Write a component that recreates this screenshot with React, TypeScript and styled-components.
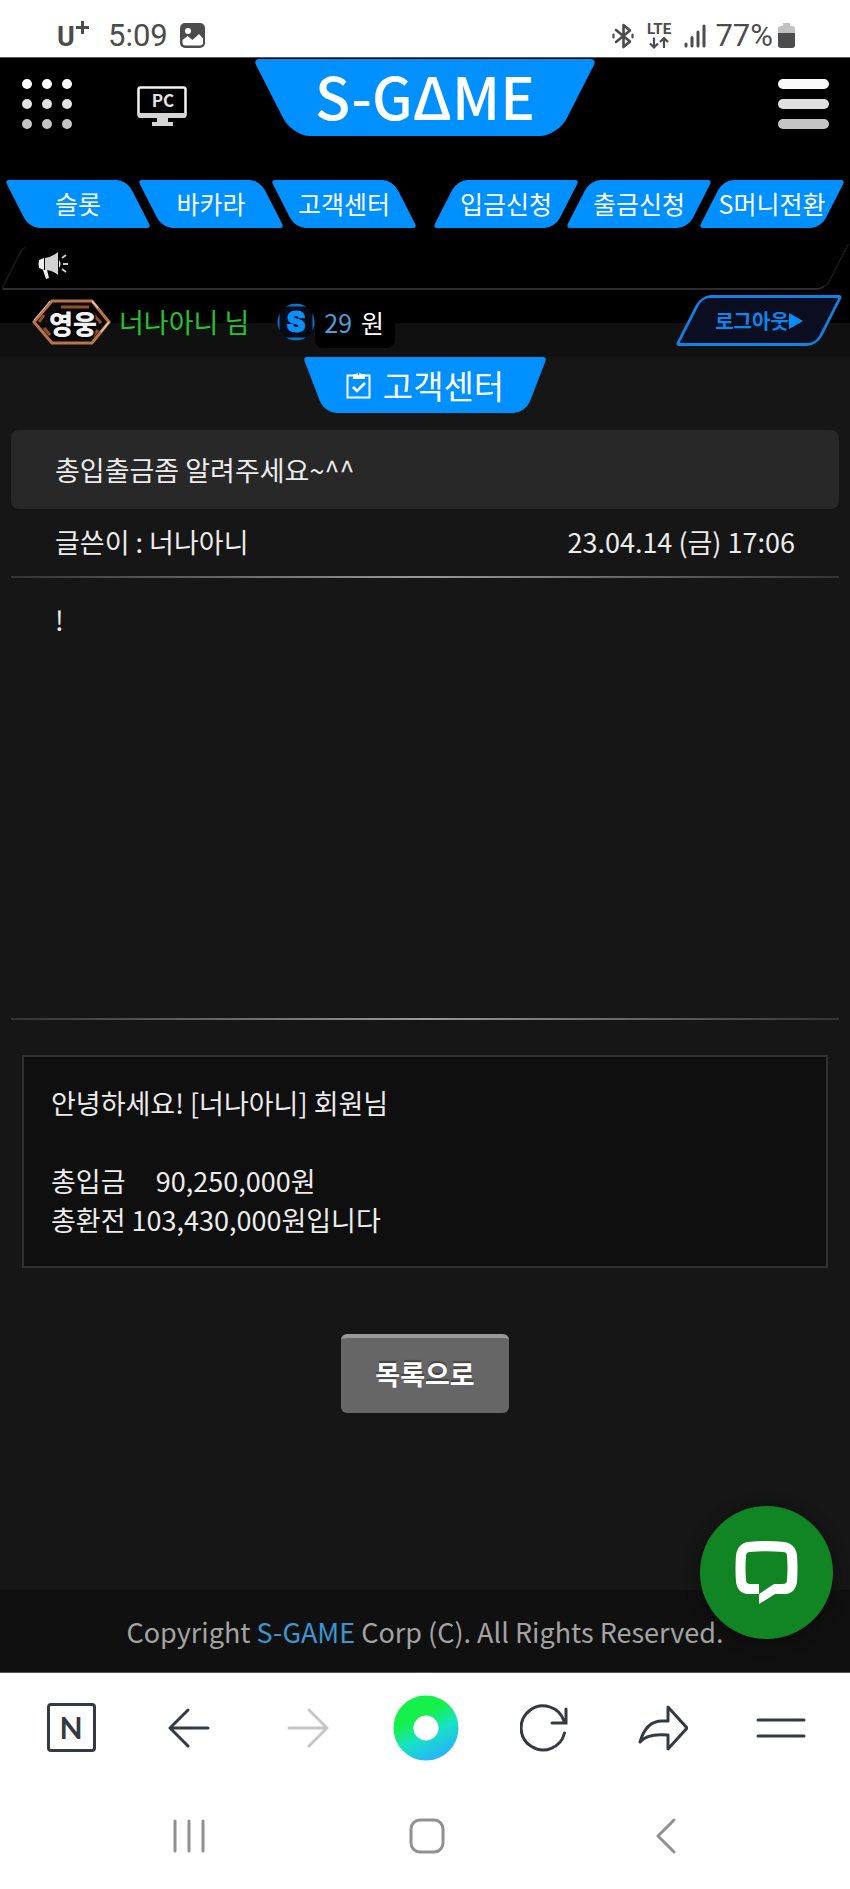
import React from "react";
import styled, { createGlobalStyle, css } from "styled-components";

const BLUE = "#0090ff";
const INK = "#343a42";

const GlobalStyle = createGlobalStyle`
  *, *::before, *::after { box-sizing: border-box; }
  body {
    margin: 0;
    background: #161616;
    color: #ececec;
    font-family: "Noto Sans CJK KR", "Noto Sans", sans-serif;
    font-size: 27px;
    line-height: 39px;
  }
  button { font: inherit; color: inherit; background: none; border: 0; padding: 0; cursor: pointer; }
  a { color: inherit; text-decoration: none; }
  h1, h2, p { margin: 0; font-weight: 400; }
  svg { display: block; }
`;

/* ---------- device status bar ---------- */

const StatusBar = styled.div`
  display: flex;
  align-items: center;
  justify-content: space-between;
  height: 58px;
  padding: 14px 55px 0 56px;
  background: #fff;
  border-bottom: 1px solid #555;
  color: #4c4c4c;
  font-family: Roboto, sans-serif;
  font-size: 31px;
  line-height: 36px;
`;

const StatusGroup = styled.div<{ $gap: number }>`
  display: flex;
  align-items: center;
  gap: ${(p) => p.$gap}px;
`;

const Battery = styled.div`
  display: flex;
  align-items: center;
  gap: 5px;
`;

/* ---------- site header ---------- */

const Header = styled.header`
  background: #000;
`;

const TopRow = styled.div`
  display: grid;
  grid-template-columns: 1fr auto 1fr;
  height: 122px;
  padding: 0 20px;
`;

const TopActions = styled.div<{ $end?: boolean }>`
  display: flex;
  align-items: center;
  justify-content: ${(p) => (p.$end ? "flex-end" : "flex-start")};
  gap: 65px;
  height: 92px;
`;

const trapezoid = (angle: number, small: number, large: number) => css`
  position: relative;
  isolation: isolate;
  &::before,
  &::after {
    content: "";
    position: absolute;
    z-index: -1;
    top: 0;
    bottom: 0;
    width: 60%;
    background: ${BLUE};
  }
  &::before {
    left: 0;
    border-radius: ${small}px 0 0 ${large}px;
    transform: skewX(${angle}deg);
    transform-origin: top left;
  }
  &::after {
    right: 0;
    border-radius: 0 ${small}px ${large}px 0;
    transform: skewX(-${angle}deg);
    transform-origin: top right;
  }
`;

const Logo = styled.a`
  ${trapezoid(27, 6, 18)}
  display: flex;
  justify-content: center;
  width: 344px;
  height: 77px;
  margin-top: 1px;
  color: #fff;
  font-size: 58px;
  font-weight: 500;
  line-height: 72px;
`;

const NavRow = styled.nav`
  display: grid;
  grid-template-columns: 1fr 1fr;
  gap: 40px;
  padding: 0 17px 15px;
`;

const NavGroup = styled.div`
  display: grid;
  grid-template-columns: repeat(3, 1fr);
  gap: 11px;
`;

const NavTab = styled.a<{ $lean: "left" | "right" }>`
  position: relative;
  isolation: isolate;
  display: flex;
  justify-content: center;
  height: 48px;
  color: #fff;
  font-size: 25px;
  line-height: 46px;
  white-space: nowrap;
  &::before {
    content: "";
    position: absolute;
    z-index: -1;
    inset: 0;
    background: ${BLUE};
    border-radius: ${(p) => (p.$lean === "left" ? "4px 10px 4px 10px" : "10px 4px 10px 4px")};
    transform: skewX(${(p) => (p.$lean === "left" ? 27 : -27)}deg);
  }
`;

const Notice = styled.div`
  position: relative;
  display: flex;
  align-items: center;
  height: 47px;
  margin: 0 12px;
  padding: 0 0 2px 26px;
  &::before {
    content: "";
    position: absolute;
    inset: 0;
    border: 2px solid #19191b;
    border-top-color: transparent;
    border-bottom-color: #2c2c31;
    border-radius: 10px 0 10px 4px;
    transform: skewX(-27deg);
  }
`;

const UserRow = styled.div`
  display: flex;
  align-items: flex-start;
  justify-content: space-between;
  height: 67px;
  padding: 5px 20px 0 32px;
  background: linear-gradient(#000 33px, #101010 33px);
`;

const UserInfo = styled.div`
  display: flex;
  align-items: center;
  height: 54px;
`;

const UserName = styled.span`
  margin: 0 28px 0 8px;
  padding-bottom: 2px;
  color: #25c32f;
`;

const Balance = styled.span`
  height: 52px;
  padding: 0 11px 0 9px;
  border-radius: 8px;
  background: #000;
  color: #fff;
  font-size: 25px;
  line-height: 52px;
`;

const Amount = styled.span`
  margin-right: 9px;
  color: #4a9fdc;
`;

const Logout = styled.button`
  position: relative;
  isolation: isolate;
  display: flex;
  align-items: center;
  justify-content: center;
  width: 142px;
  height: 51px;
  color: #0c86ec;
  font-size: 20px;
  font-weight: 700;
  &::before {
    content: "";
    position: absolute;
    z-index: -1;
    inset: 0;
    border: 3px solid #0c84ea;
    border-radius: 10px 4px 10px 4px;
    background: #0a0e20;
    transform: skewX(-27deg);
  }
`;

/* ---------- post ---------- */

const Site = styled.div`
  position: relative;
  border-bottom: 1px solid #555;
`;

const Main = styled.main`
  display: flex;
  flex-direction: column;
  padding: 0 11px 177px;
`;

const SectionTitle = styled.h1`
  ${trapezoid(21, 4, 12)}
  display: flex;
  align-items: center;
  align-self: center;
  justify-content: center;
  gap: 11px;
  width: 244px;
  height: 56px;
  margin-bottom: 17px;
  color: #fff;
  font-size: 33px;
  line-height: 56px;
`;

const PostTitle = styled.h2`
  padding: 20px 44px;
  border-radius: 8px;
  background: #282828;
  font-size: 27px;
`;

const PostMeta = styled.div`
  display: flex;
  justify-content: space-between;
  padding: 13px 44px 15px;
`;

const Divider = styled.hr`
  width: 100%;
  height: 2px;
  margin: 0;
  border: 0;
  background: linear-gradient(90deg, #333, #999 50%, #333);
`;

const PostBody = styled.p`
  min-height: 440px;
  padding: 22px 44px;
`;

const Reply = styled.section`
  margin: 35px 11px 66px;
  padding: 26px 27px 27px;
  border: 2px solid #303030;
  background: #0f0f0f;
  white-space: pre-wrap;
`;

const ListButton = styled.button`
  align-self: center;
  width: 168px;
  height: 79px;
  padding-bottom: 4px;
  border-top: 4px solid #999;
  border-radius: 6px;
  background: #666;
  color: #fff;
  font-weight: 700;
  text-shadow: 0 -2px 1px #444;
`;

const Footer = styled.footer`
  padding: 22px 0 21px;
  background: #101010;
  color: #a3a3a3;
  text-align: center;
`;

const Brand = styled.a`
  color: #3b96d4;
`;

const ChatButton = styled.button`
  position: absolute;
  right: 17px;
  bottom: 33px;
  display: flex;
  align-items: center;
  justify-content: center;
  width: 133px;
  height: 133px;
  border-radius: 50%;
  background: #118423;
  box-shadow: 0 2px 16px rgba(0, 0, 0, 0.4);
`;

/* ---------- browser and system bars ---------- */

const Toolbar = styled.nav`
  display: grid;
  grid-template-columns: repeat(7, 1fr);
  align-items: center;
  justify-items: center;
  height: 109px;
  padding: 0 10px 0 12px;
  background: #fff;
  color: ${INK};
`;

const SystemBar = styled.nav`
  display: grid;
  grid-template-columns: repeat(3, 1fr);
  align-items: center;
  justify-items: center;
  height: 107px;
  padding: 0 65px 0 70px;
  background: #fff;
  color: #919191;
`;

const HomeN = styled.button`
  width: 49px;
  height: 49px;
  border: 3px solid ${INK};
  border-radius: 4px;
  font-family: Lato, sans-serif;
  font-size: 30px;
  font-weight: 700;
  line-height: 43px;
`;

/* ---------- icons ---------- */

const PhotoIcon = () => (
  <svg width="25" height="25" viewBox="0 0 25 25">
    <rect x="0" y="0" width="25" height="25" rx="5" fill="#4c4c4c" />
    <circle cx="8" cy="8" r="3" fill="#fff" />
    <path d="M2.500 17l5-4 5 4 6.500-6 4 4.500v4a3 3 0 0 1-3 3h-14.500a3 3 0 0 1-3-3z" fill="#fff" />
  </svg>
);

const CarrierMark = () => (
  <svg width="34" height="40" viewBox="0 -5 34 40" fill="#4c4c4c" fontFamily="Roboto, sans-serif" fontWeight="700">
    <text x="1" y="25" fontSize="27">U</text>
    <path d="M20 6.500h13M26.500 0v13" stroke="#4c4c4c" strokeWidth="3" />
  </svg>
);

const BluetoothIcon = () => (
  <svg width="22" height="26" viewBox="0 0 22 26" fill="none" stroke="#4c4c4c" strokeWidth="2.600" strokeLinejoin="round" strokeLinecap="round">
    <path d="M4 7l14 11.500-6.500 5.500V2l6.500 5.500L4 19" />
    <path d="M1.500 11.500v3M20.500 11.500v3" strokeWidth="2.200" />
  </svg>
);

const LteIcon = () => (
  <svg width="28" height="36" viewBox="0 -5 28 36">
    <text x="14" y="11" textAnchor="middle" fontFamily="Roboto, sans-serif" fontSize="15" fontWeight="700" fill="#4c4c4c">LTE</text>
    <path d="M9 14.500v9.500M5 20.500l4 4 4-4M19 25v-9.500M15 19l4-4 4 4" fill="none" stroke="#4c4c4c" strokeWidth="2.200" />
  </svg>
);

const SignalIcon = () => (
  <svg width="22" height="24" viewBox="0 0 22 24" stroke="#4c4c4c" strokeWidth="3" strokeLinecap="round">
    <path d="M2 20v2M8 13.500v8.500M14 8v14M20 2v20" />
  </svg>
);

const BatteryIcon = () => (
  <svg width="17" height="25" viewBox="0 0 17 25">
    <path d="M5 0h7v3h2a3 3 0 0 1 3 3v4H0V6a3 3 0 0 1 3-3h2z" fill="#c2c2c2" />
    <path d="M0 10h17v12a3 3 0 0 1-3 3H3a3 3 0 0 1-3-3z" fill="#4c4c4c" />
  </svg>
);

const DotsIcon = () => (
  <svg width="52" height="52" viewBox="0 0 52 52">
    {[6, 26, 46].map((y, row) =>
      [7, 27, 47].map((x) => (
        <circle key={`${x}-${y}`} cx={x} cy={y} r="5" fill={["#fff", "#e2e2e2", "#c4c4c4"][row]} />
      ))
    )}
  </svg>
);

const PcIcon = () => (
  <svg width="50" height="46" viewBox="0 -4 50 46">
    <rect x="1.500" y="2.500" width="47" height="29" rx="2" fill="none" stroke="#f4f4f4" strokeWidth="2.500" />
    <path d="M1 28h48v3a2 2 0 0 1-2 2H3a2 2 0 0 1-2-2zM20 33h11v4h5v4H15v-4h5z" fill="#d4d4d4" />
    <text x="26" y="22" textAnchor="middle" fontFamily="Noto Sans CJK KR, sans-serif" fontSize="17" fontWeight="700" fill="#e4e4e4">PC</text>
  </svg>
);

const MenuIcon = () => (
  <svg width="52" height="52" viewBox="0 0 52 52">
    <rect x="0" y="1" width="51" height="10" rx="5" fill="#fafafa" />
    <rect x="0" y="21" width="51" height="10" rx="5" fill="#e0e0e0" />
    <rect x="0" y="41" width="51" height="10" rx="5" fill="#c4c4c4" />
  </svg>
);

const MegaphoneIcon = () => (
  <svg width="30" height="28" viewBox="0 0 30 28">
    <path d="M1 8l5-2v12l-5-2q-1-4 0-8z" fill="#eee" />
    <path d="M7 6q7-1 13-6v23q-6-5-13-5z" fill="#d2d2d2" />
    <path d="M5 18h4l2 8-3 1z" fill="#f2f2f2" />
    <path d="M24 6l4-3M25 12h5M24 17l4 3" stroke="#c8c8c8" strokeWidth="2" />
    <path d="M21 8q3 4 0 8z" fill="#eee" />
  </svg>
);

const HeroBadge = () => (
  <svg width="79" height="46" viewBox="0 0 79 46" role="img" aria-label="영웅">
    <path d="M2 23L20 2h40l17 21-17 21H20z" fill="#0b0806" stroke="#bd7443" strokeWidth="3" />
    <path d="M7 23l5-7M29 8h28M60 14l9 10M12 29l6 7M66 31l-5 6" stroke="#8f5328" strokeWidth="3" />
    <path d="M2 21L18 2" stroke="#ddd0c8" strokeWidth="1" />
    <path d="M60 2l6 7M77 23l-8 10" stroke="#ddc8b8" strokeWidth="1.500" />
    <text x="41" y="35" textAnchor="middle" fontFamily="Noto Sans CJK KR, sans-serif" fontSize="26" fontWeight="900" fill="#f2f2f2" stroke="#000" strokeWidth="3" paintOrder="stroke">영웅</text>
  </svg>
);

const CoinIcon = () => (
  <svg width="38" height="38" viewBox="0 0 38 38">
    <defs>
      <clipPath id="coin"><circle cx="19" cy="19" r="18.500" /></clipPath>
    </defs>
    <circle cx="19" cy="19" r="18.500" fill="#020b16" />
    <g clipPath="url(#coin)" stroke="#0876cf" strokeWidth="3">
      <path d="M0 2h38M0 36h38" />
      <path d="M1 10v18M37 10v18" />
    </g>
    <text x="19" y="29" textAnchor="middle" fontFamily="Inter, sans-serif" fontSize="28" fontWeight="900" fill="#0a90fa" stroke="#0a90fa" strokeWidth="1">S</text>
  </svg>
);

const ClipboardIcon = () => (
  <svg width="26" height="28" viewBox="0 0 26 28">
    <rect x="1.500" y="4.500" width="22" height="22" fill="none" stroke="#fff" strokeWidth="2" />
    <path d="M7 3h3a3 3 0 0 1 5 0h4v5H7z" fill="#fff" />
    <circle cx="12.500" cy="3" r="1" fill={BLUE} />
    <path d="M7 16l4 4 8-8" fill="none" stroke="#fff" strokeWidth="2.600" />
  </svg>
);

const PlayIcon = () => (
  <svg width="14" height="16" viewBox="0 0 14 16"><path d="M0 0l14 8-14 8z" fill={BLUE} /></svg>
);

const ChatIcon = () => (
  <svg width="63" height="63" viewBox="0 0 63 63">
    <path
      fill="#fff"
      fillRule="evenodd"
      d="M13 1Q31-1 49 1C57 2 61 7 62 14Q63 28 62 41C61 48 57 53 50 53H40L24 63V53H13C6 53 2 48 1 41Q0 28 1 14C2 7 6 2 13 1zM15 11Q31 9.500 48 11Q52 11 52 15Q53 27 52 39Q52 43 48 43H39L24 53V43H15Q11 43 11 39Q10 27 11 15Q11 11 15 11z"
    />
  </svg>
);

const strokeProps = { fill: "none", stroke: "currentColor", strokeWidth: 3, strokeLinecap: "round", strokeLinejoin: "round" } as const;

const BackIcon = () => (
  <svg width="42" height="42" viewBox="0 0 42 42" {...strokeProps}><path d="M40 21H2M20 3L2 21l18 18" /></svg>
);

const ForwardIcon = () => (
  <svg width="42" height="42" viewBox="0 0 42 42" {...strokeProps} stroke="#c4c5c7"><path d="M2 21h38M22 3l18 18-18 18" /></svg>
);

const GreenDot = () => (
  <svg width="66" height="66" viewBox="0 0 66 66">
    <defs>
      <linearGradient id="dot" x1="0.250" y1="0.100" x2="0.750" y2="1.100">
        <stop offset="0.150" stopColor="#16f04a" />
        <stop offset="0.550" stopColor="#17e3c2" />
        <stop offset="1" stopColor="#25b8f6" />
      </linearGradient>
    </defs>
    <circle cx="33" cy="33" r="22.500" fill="none" stroke="url(#dot)" strokeWidth="20" />
  </svg>
);

const ReloadIcon = () => (
  <svg width="48" height="48" viewBox="0 0 48 48" {...strokeProps} strokeLinejoin="miter">
    <path d="M44.500 29A22 22 0 1 1 44 17M46 5v14H32" />
  </svg>
);

const ShareIcon = () => (
  <svg width="50" height="46" viewBox="0 0 50 46" {...strokeProps}>
    <path d="M30 2l19 21-19 21V30Q9 28 2 37Q8 16 24 16h6z" />
  </svg>
);

const LinesIcon = () => (
  <svg width="50" height="20" viewBox="0 0 50 20" {...strokeProps}><path d="M2 2h46M2 18h46" /></svg>
);

const RecentsIcon = () => (
  <svg width="34" height="36" viewBox="0 0 34 36" {...strokeProps}><path d="M3 3v30M17 3v30M31 3v30" /></svg>
);

const HomeIcon = () => (
  <svg width="36" height="36" viewBox="0 0 36 36" {...strokeProps}><rect x="2" y="2" width="32" height="32" rx="9" /></svg>
);

const ChevronIcon = () => (
  <svg width="20" height="36" viewBox="0 0 20 36" {...strokeProps}><path d="M18 2L2 18l16 16" /></svg>
);

/* ---------- page ---------- */

const LEFT_TABS = ["슬롯", "바카라", "고객센터"];
const RIGHT_TABS = ["입금신청", "출금신청", "S머니전환"];

const REPLY = `안녕하세요! [너나아니] 회원님

총입금     90,250,000원
총환전 103,430,000원입니다`;

export default function App() {
  return (
    <>
      <GlobalStyle />
      <StatusBar>
        <StatusGroup $gap={18}>
          <CarrierMark />
          <StatusGroup $gap={12}>
            <span>5:09</span>
            <PhotoIcon />
          </StatusGroup>
        </StatusGroup>
        <StatusGroup $gap={11}>
          <BluetoothIcon />
          <LteIcon />
          <StatusGroup $gap={9}>
            <SignalIcon />
            <Battery>
              <span>77%</span>
              <BatteryIcon />
            </Battery>
          </StatusGroup>
        </StatusGroup>
      </StatusBar>

      <Site>
        <Header>
          <TopRow>
            <TopActions>
              <button aria-label="전체 메뉴"><DotsIcon /></button>
              <button aria-label="PC 화면"><PcIcon /></button>
            </TopActions>
            <Logo href="#">S-GΔME</Logo>
            <TopActions $end>
              <button aria-label="메뉴"><MenuIcon /></button>
            </TopActions>
          </TopRow>
          <NavRow>
            <NavGroup>
              {LEFT_TABS.map((label) => <NavTab key={label} href="#" $lean="left">{label}</NavTab>)}
            </NavGroup>
            <NavGroup>
              {RIGHT_TABS.map((label) => <NavTab key={label} href="#" $lean="right">{label}</NavTab>)}
            </NavGroup>
          </NavRow>
          <Notice><MegaphoneIcon /></Notice>
          <UserRow>
            <UserInfo>
              <HeroBadge />
              <UserName>너나아니 님</UserName>
              <CoinIcon />
              <Balance><Amount>29</Amount>원</Balance>
            </UserInfo>
            <Logout>로그아웃<PlayIcon /></Logout>
          </UserRow>
        </Header>

        <Main>
          <SectionTitle><ClipboardIcon />고객센터</SectionTitle>
          <PostTitle>총입출금좀 알려주세요~^^</PostTitle>
          <PostMeta>
            <span>글쓴이 : 너나아니</span>
            <time>23.04.14 (금) 17:06</time>
          </PostMeta>
          <Divider />
          <PostBody>!</PostBody>
          <Divider />
          <Reply>{REPLY}</Reply>
          <ListButton>목록으로</ListButton>
        </Main>

        <Footer>
          Copyright <Brand href="#">S-GAME</Brand> Corp (C). All Rights Reserved.
        </Footer>
        <ChatButton aria-label="채팅 상담"><ChatIcon /></ChatButton>
      </Site>

      <Toolbar>
        <HomeN>N</HomeN>
        <button aria-label="뒤로"><BackIcon /></button>
        <button aria-label="앞으로"><ForwardIcon /></button>
        <button aria-label="그린닷"><GreenDot /></button>
        <button aria-label="새로고침"><ReloadIcon /></button>
        <button aria-label="공유"><ShareIcon /></button>
        <button aria-label="더보기"><LinesIcon /></button>
      </Toolbar>
      <SystemBar>
        <button aria-label="최근 앱"><RecentsIcon /></button>
        <button aria-label="홈"><HomeIcon /></button>
        <button aria-label="이전"><ChevronIcon /></button>
      </SystemBar>
    </>
  );
}
